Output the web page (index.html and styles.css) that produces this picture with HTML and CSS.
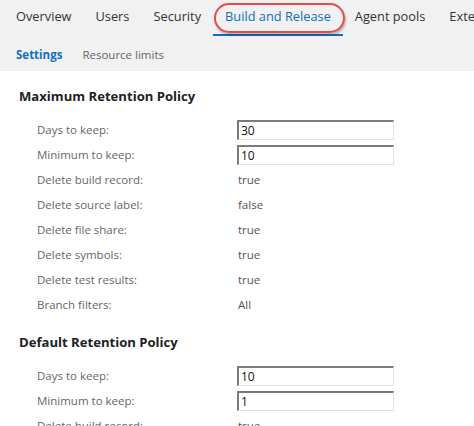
FILE: index.html
```html
<!DOCTYPE html>
<html>
<head>
<meta charset="utf-8">
<link rel="stylesheet" href="styles.css">
</head>
<body>
<div class="header">
  <nav class="tabs">
    <span class="tab">Overview</span>
    <span class="tab">Users</span>
    <span class="tab">Security</span>
    <span class="tab active">Build and Release<span class="annot"></span></span>
    <span class="tab">Agent pools</span>
    <span class="tab">Extensions</span>
  </nav>
  <nav class="subtabs">
    <span class="subtab active">Settings</span>
    <span class="subtab">Resource limits</span>
  </nav>
</div>
<main class="content">
  <section class="policy">
    <h2>Maximum Retention Policy</h2>
    <div class="rows">
      <div class="row"><span class="label">Days to keep:</span><input class="field" value="30"></div>
      <div class="row"><span class="label">Minimum to keep:</span><input class="field" value="10"></div>
      <div class="row"><span class="label">Delete build record:</span><span class="value">true</span></div>
      <div class="row"><span class="label">Delete source label:</span><span class="value">false</span></div>
      <div class="row"><span class="label">Delete file share:</span><span class="value">true</span></div>
      <div class="row"><span class="label">Delete symbols:</span><span class="value">true</span></div>
      <div class="row"><span class="label">Delete test results:</span><span class="value">true</span></div>
      <div class="row"><span class="label">Branch filters:</span><span class="value">All</span></div>
    </div>
  </section>
  <section class="policy">
    <h2>Default Retention Policy</h2>
    <div class="rows">
      <div class="row"><span class="label">Days to keep:</span><input class="field" value="10"></div>
      <div class="row"><span class="label">Minimum to keep:</span><input class="field" value="1"></div>
      <div class="row"><span class="label">Delete build record:</span><span class="value">true</span></div>
      <div class="row"><span class="label">Delete source label:</span><span class="value">false</span></div>
    </div>
  </section>
</main>
</body>
</html>
```
FILE: styles.css
```css
html, body {
  margin: 0;
  padding: 0;
  background: #fff;
  overflow: hidden;
  font-family: "Open Sans", "Noto Sans", sans-serif;
}
.header {
  background: #f1f1f1;
  height: 71px;
}
.tabs {
  display: flex;
  padding-left: 4px;
  height: 36px;
  white-space: nowrap;
}
.tab {
  position: relative;
  padding: 0 12px;
  font-size: 12.8px;
  color: #333;
  line-height: 33px;
  border-bottom: 2px solid transparent;
}
.tab.active {
  color: #106ebe;
  border-bottom-color: #106ebe;
}
.annot {
  position: absolute;
  left: 1px;
  right: -2px;
  top: 3px;
  height: 26px;
  border: 2px solid #e8484d;
  border-radius: 15px;
  box-shadow: 1px 2px 2px rgba(0,0,0,0.25);
}
.subtabs {
  display: flex;
  gap: 20px;
  padding-left: 16px;
  height: 37px;
  align-items: center;
}
.subtab {
  font-size: 11.5px;
  color: #666;
}
.subtab.active {
  color: #0f6fc6;
  font-weight: 700;
}
.policy h2 {
  margin: 15px 0 0 19px;
  font-size: 13.1px;
  line-height: 20px;
  font-weight: 700;
  color: #222;
}
.rows {
  padding: 11px 0 0 37px;
}
.row {
  display: grid;
  grid-template-columns: 200px 157px;
  height: 25px;
  align-items: center;
}
.label {
  font-size: 11.5px;
  color: #666;
}
.value {
  font-size: 11.5px;
  color: #555;
  padding-left: 1px;
}
.field {
  box-sizing: border-box;
  width: 157px;
  height: 20px;
  margin: 0;
  padding: 0 0 0 2px;
  font: inherit;
  font-size: 12px;
  color: #111;
  background: #fff;
  border: 1px solid #e3e3e3;
  border-top: 2px solid #7a7a7a;
  border-left: 2px solid #7a7a7a;
  outline: none;
}
```
